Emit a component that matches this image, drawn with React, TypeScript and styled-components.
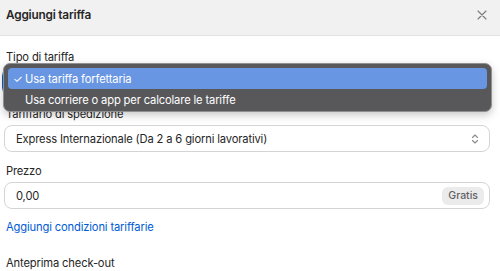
import React from "react";
import styled, { createGlobalStyle } from "styled-components";

const GlobalStyle = createGlobalStyle`
  html, body {
    margin: 0;
    padding: 0;
    background: #ffffff;
  }
  body {
    font-family: Inter, "Noto Sans", "Liberation Sans", sans-serif;
    color: #262626;
    -webkit-font-smoothing: antialiased;
  }
`;

const Modal = styled.div`
  width: 500px;
  height: 271px;
  overflow: hidden;
  background: #ffffff;
`;

const Header = styled.header`
  height: 35px;
  display: flex;
  align-items: center;
  justify-content: space-between;
  padding: 0 10px 0 6px;
  background: #f1f1f1;
  border-bottom: 1px solid #e3e3e3;
  box-sizing: content-box;
`;

const Title = styled.h2`
  margin: 0 0 6px;
  font-size: 11.8px;
  font-weight: 600;
  letter-spacing: -0.2px;
  color: #262626;
`;

const CloseButton = styled.button`
  width: 16px;
  height: 16px;
  padding: 0;
  border: 0;
  background: transparent;
  display: flex;
  align-items: center;
  justify-content: center;
  margin-bottom: 6px;
`;

const Body = styled.div`
  display: flex;
  flex-direction: column;
  padding: 14px 10px 0 4px;
`;

const Field = styled.div`
  position: relative;
  display: flex;
  flex-direction: column;
  gap: 4px;
  margin-bottom: 12px;
`;

const Label = styled.label`
  font-size: 11.2px;
  line-height: 14px;
  letter-spacing: -0.15px;
  padding-left: 2px;
`;

const Box = styled.div<{ $focused?: boolean }>`
  height: 27px;
  box-sizing: border-box;
  display: flex;
  align-items: center;
  justify-content: space-between;
  padding: 0 9px 0 11px;
  border: 1px solid ${(p) => (p.$focused ? "#005bd3" : "#d4d4d4")};
  box-shadow: ${(p) => (p.$focused ? "0 0 0 2px #005bd3" : "none")};
  border-radius: 8px;
  background: #ffffff;
  font-size: 11.2px;
  letter-spacing: -0.15px;
`;

const Badge = styled.span`
  height: 18px;
  padding: 0 6px;
  display: flex;
  align-items: center;
  border-radius: 6px;
  background: #ebebeb;
  font-size: 10.5px;
  font-weight: 500;
  letter-spacing: 0;
  color: #616161;
  margin-right: -4px;
`;

const Menu = styled.ul`
  position: absolute;
  left: -1px;
  right: -2px;
  top: 13px;
  margin: 0;
  padding: 4px 4px 1px;
  list-style: none;
  background: #58585b;
  border: 1px solid #909093;
  border-radius: 7px;
  box-shadow: 0 3px 8px rgba(0, 0, 0, 0.22);
  z-index: 2;
`;

const MenuItem = styled.li<{ $active?: boolean }>`
  height: 21px;
  display: flex;
  align-items: center;
  padding-left: 5px;
  border-radius: 4px;
  background: ${(p) => (p.$active ? "#6896e2" : "transparent")};
  color: #ffffff;
  font-size: 11.2px;
  letter-spacing: -0.15px;
`;

const Check = styled.span`
  width: 12px;
  font-size: 11px;
`;

const Link = styled.a`
  font-size: 11.2px;
  line-height: 14px;
  letter-spacing: -0.15px;
  color: #005bd3;
  padding-left: 2px;
  margin-top: -1px;
`;

const Section = styled.div`
  margin-top: 22px;
  font-size: 11.2px;
  line-height: 14px;
  letter-spacing: -0.15px;
  padding-left: 2px;
`;

const options = [
  "Usa tariffa forfettaria",
  "Usa corriere o app per calcolare le tariffe",
];

function UpDown() {
  return (
    <svg width="10" height="12" viewBox="0 0 10 12" fill="none">
      <path
        d="M2.5 4.5 5 2l2.5 2.5M2.5 7.5 5 10l2.5-2.5"
        stroke="#8a8a8a"
        strokeWidth="1.1"
        strokeLinecap="round"
        strokeLinejoin="round"
      />
    </svg>
  );
}

export default function App() {
  return (
    <Modal>
      <GlobalStyle />
      <Header>
        <Title>Aggiungi tariffa</Title>
        <CloseButton aria-label="Chiudi">
          <svg width="10" height="10" viewBox="0 0 10 10">
            <path
              d="M1 1l8 8M9 1l-8 8"
              stroke="#7a7a7a"
              strokeWidth="1.1"
              strokeLinecap="round"
            />
          </svg>
        </CloseButton>
      </Header>
      <Body>
        <Field>
          <Label>Tipo di tariffa</Label>
          <Box $focused>
            Usa tariffa forfettaria
            <UpDown />
          </Box>
          <Menu>
            {options.map((o, i) => (
              <MenuItem key={o} $active={i === 0}>
                <Check>{i === 0 ? "✓" : ""}</Check>
                {o}
              </MenuItem>
            ))}
          </Menu>
        </Field>
        <Field>
          <Label>Tariffario di spedizione</Label>
          <Box>
            Express Internazionale (Da 2 a 6 giorni lavorativi)
            <UpDown />
          </Box>
        </Field>
        <Field>
          <Label>Prezzo</Label>
          <Box>
            0,00
            <Badge>Gratis</Badge>
          </Box>
        </Field>
        <Link>Aggiungi condizioni tariffarie</Link>
        <Section>Anteprima check-out</Section>
      </Body>
    </Modal>
  );
}
